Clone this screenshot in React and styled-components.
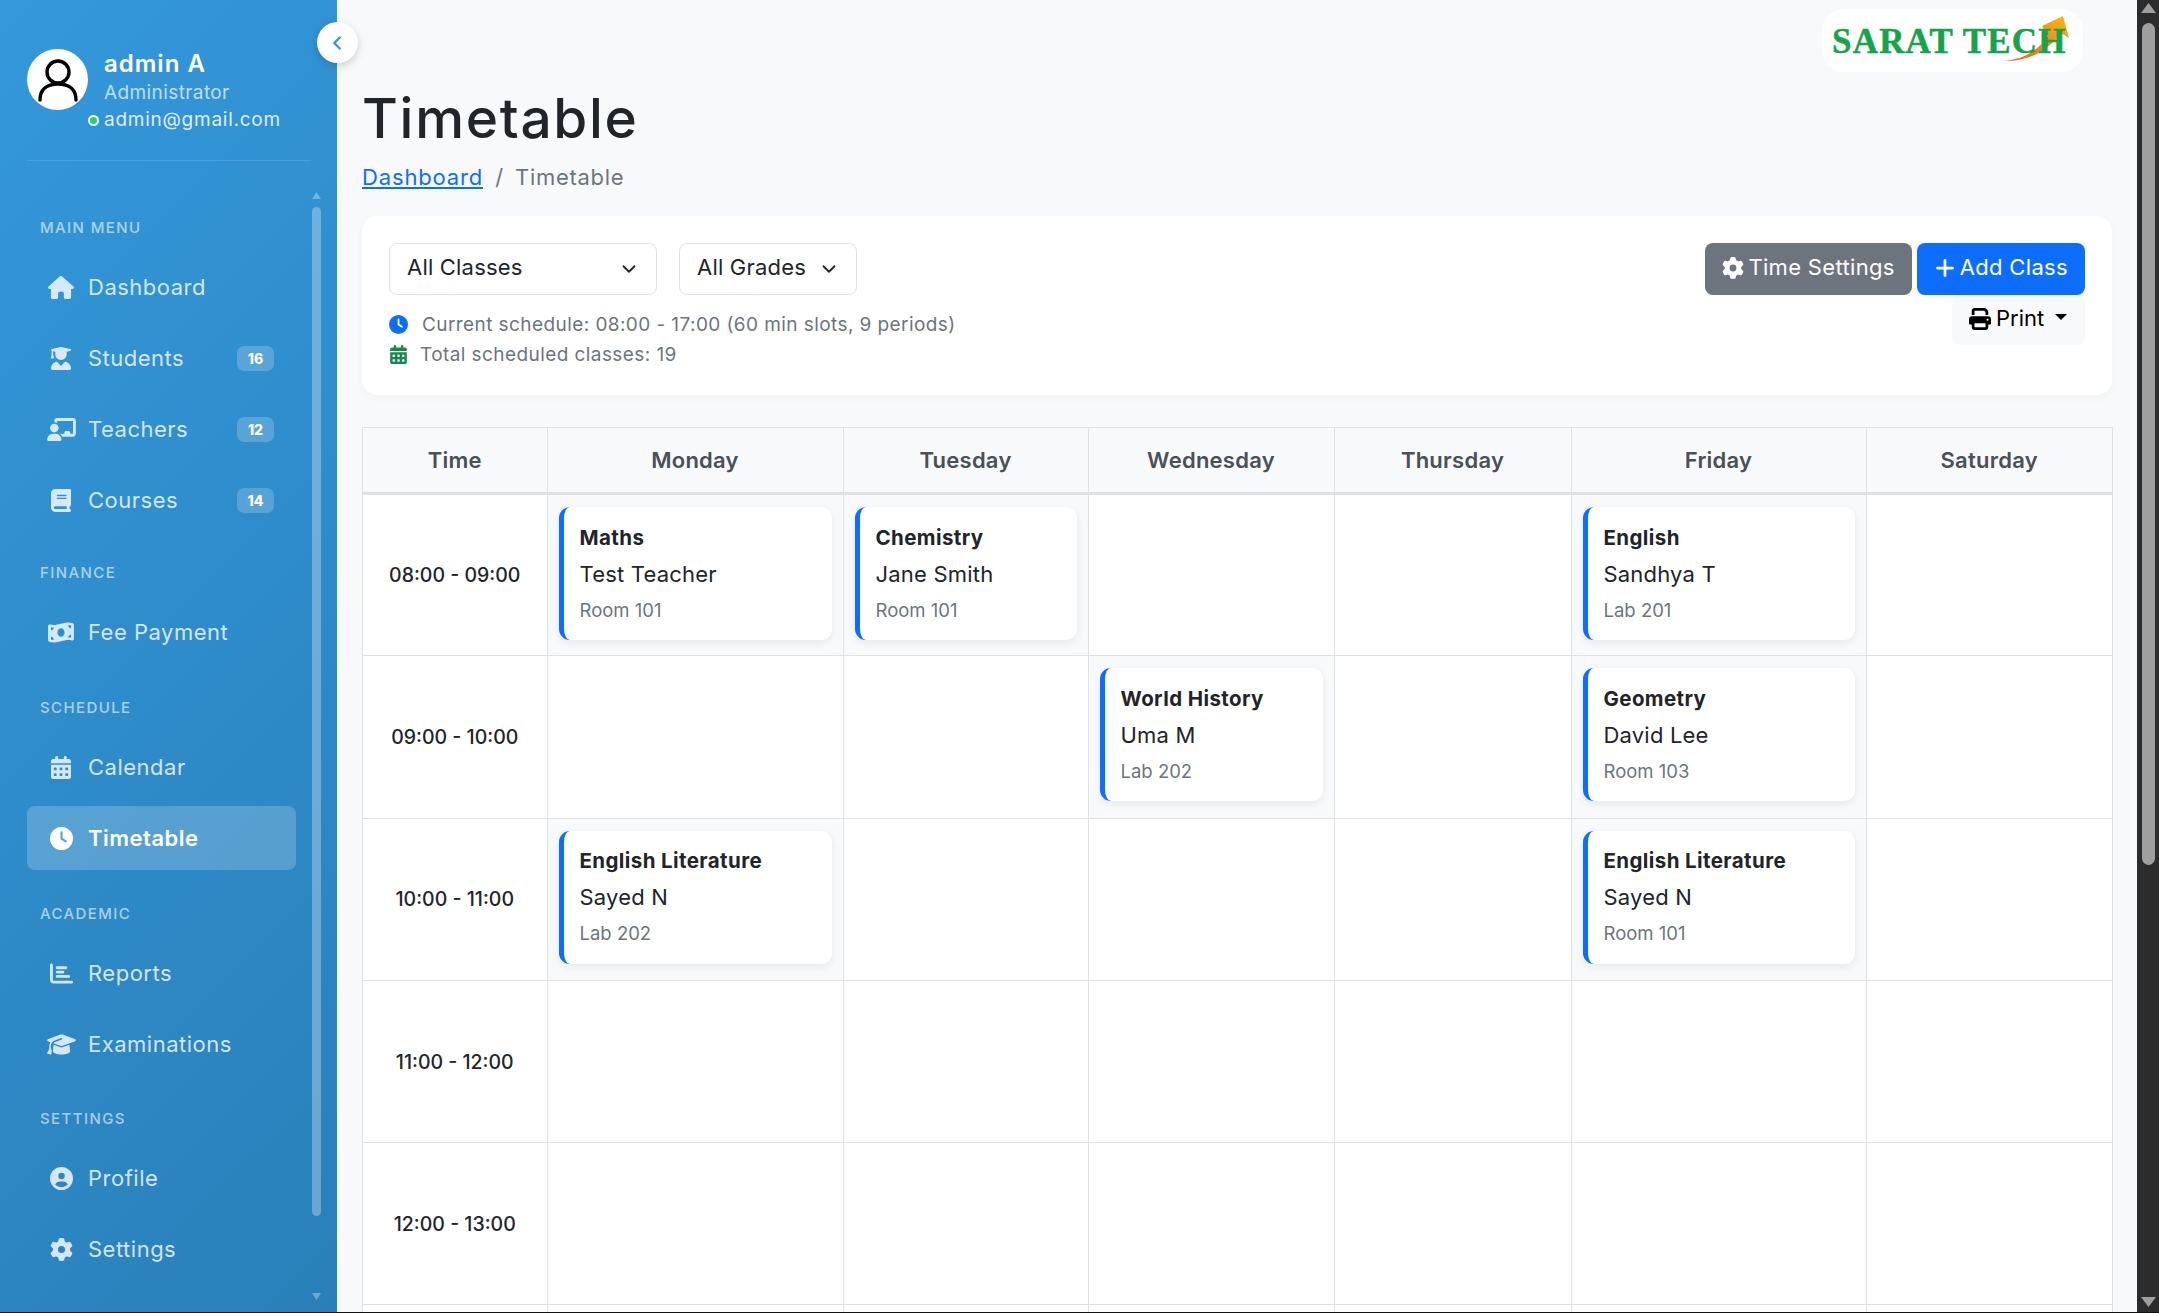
import React from 'react';
import styled, { createGlobalStyle, css } from 'styled-components';
import {
  FaHouse, FaUserGraduate, FaChalkboardUser, FaBook, FaMoneyBillWave, FaCalendarDays,
  FaClock, FaChartBar, FaGraduationCap, FaCircleUser, FaGear, FaPrint, FaPlus,
} from 'react-icons/fa6';
import { LuChevronDown, LuChevronLeft } from 'react-icons/lu';

const FONT = `"Inter", "Noto Sans", "Liberation Sans", sans-serif`;

const Global = createGlobalStyle`
  html, body { margin: 0; height: 100%; overflow: hidden; background: #111; }
  body { font-family: ${FONT}; color: #212529; }
  * { box-sizing: border-box; }
`;

const Shell = styled.div`
  display: flex;
  height: 1312px;
`;

const Sidebar = styled.aside`
  position: relative;
  flex: 0 0 337px;
  display: flex;
  flex-direction: column;
  background: linear-gradient(135deg, #3498db 0%, #2980b9 100%);
  z-index: 2;
`;

const Toggle = styled.button`
  position: absolute;
  top: 22px;
  right: -21px;
  width: 41px;
  height: 41px;
  border: 0;
  padding: 0;
  border-radius: 50%;
  background: #fff;
  color: #3498db;
  display: flex;
  align-items: center;
  justify-content: center;
  box-shadow: 0 3px 8px rgba(0, 0, 0, 0.18);
  font-size: 22px;
  svg { stroke-width: 2.6; margin-right: 2px; }
`;

const Profile = styled.div`
  margin: 0 26px 0 27px;
  height: 161px;
  padding-top: 49px;
  display: flex;
  gap: 16px;
  border-bottom: 1px solid rgba(255, 255, 255, 0.12);
  flex: none;
`;

const Avatar = styled.div`
  position: relative;
  flex: none;
  width: 61px;
  height: 61px;
  border-radius: 50%;
  background: #fff;
  display: flex;
  align-items: center;
  justify-content: center;
`;

const AvatarSvg = styled.svg`
  width: 48px;
  height: 48px;
`;

const OnlineDot = styled.span`
  position: absolute;
  left: 61px;
  top: 66px;
  width: 11px;
  height: 11px;
  border-radius: 50%;
  background: #2ecc71;
  border: 2px solid #fff;
`;

const ProfileText = styled.div`
  display: flex;
  flex-direction: column;
  color: #fff;
`;

const Name = styled.div`
  font-size: 24px;
  font-weight: 600;
  line-height: 30px;
  letter-spacing: 1px;
`;

const Role = styled.div`
  font-size: 19px;
  line-height: 27px;
  color: rgba(255, 255, 255, 0.7);
  letter-spacing: 0.4px;
`;

const Email = styled.div`
  font-size: 19px;
  line-height: 28px;
  color: rgba(255, 255, 255, 0.85);
  letter-spacing: 0.75px;
`;

const NavArea = styled.div`
  flex: 1;
  min-height: 0;
  display: flex;
`;

const Nav = styled.nav`
  flex: 1;
  min-width: 0;
  overflow: hidden;
  padding: 55px 16px 0 27px;
`;

const Rail = styled.div`
  flex: none;
  width: 9px;
  margin: 31px 16px 12px 0;
  display: flex;
  flex-direction: column;
`;

const RailArrow = styled.svg`
  display: block;
  flex: none;
  width: 9px;
  height: 7px;
  fill: rgba(255, 255, 255, 0.32);
`;

const RailThumb = styled.div`
  flex: none;
  height: 1009px;
  margin: 8px 0 auto;
  border-radius: 5px;
  background: rgba(255, 255, 255, 0.3);
`;

const SectionLabel = styled.div`
  padding: 0 13px;
  height: 22px;
  margin-top: ${(p) => p.$top}px;
  margin-bottom: 17px;
  display: flex;
  align-items: center;
  font-size: 15px;
  font-weight: 500;
  letter-spacing: 1.4px;
  text-transform: uppercase;
  color: rgba(255, 255, 255, 0.6);
`;

const NavItem = styled.a`
  display: flex;
  align-items: center;
  height: 64px;
  margin-top: 7px;
  padding: 0 22px 0 20px;
  border-radius: 8px;
  font-size: 22px;
  color: rgba(255, 255, 255, 0.8);
  ${(p) => p.$active && css`
    background: rgba(255, 255, 255, 0.2);
    color: #fff;
    font-weight: 600;
  `}
`;

const NavIcon = styled.span`
  flex: none;
  width: 28px;
  margin-right: 13px;
  display: flex;
  justify-content: center;
  svg { flex: none; width: ${(p) => p.$w}px; height: 23px; }
`;

const NavText = styled.span`
  flex: 1;
  letter-spacing: 0.5px;
`;

const Badge = styled.span`
  flex: none;
  width: 37px;
  height: 25px;
  border-radius: 7px;
  background: rgba(255, 255, 255, 0.2);
  color: #fff;
  display: flex;
  align-items: center;
  justify-content: center;
  font-size: 14px;
  font-weight: 800;
`;

const Main = styled.main`
  flex: 1;
  min-width: 0;
  background: #f8f9fa;
  overflow: hidden;
  padding: 9px 25px 0;
`;

const PageBar = styled.div`
  flex: 0 0 22px;
  background: #2c2c2c;
  display: flex;
  flex-direction: column;
  align-items: center;
  padding: 3px 0 5px;
`;

const BarArrow = styled.svg`
  display: block;
  flex: none;
  width: 15px;
  height: 10px;
  fill: #9f9f9f;
`;

const BarThumb = styled.div`
  flex: none;
  width: 13px;
  height: 842px;
  margin: 10px 0 auto;
  border-radius: 7px;
  background: #9f9f9f;
`;

const LogoRow = styled.div`
  display: flex;
  justify-content: flex-end;
  padding-right: 29px;
`;

const LogoBox = styled.div`
  position: relative;
  width: 261px;
  height: 63px;
  border-radius: 22px;
  background: #fff;
  display: flex;
  align-items: center;
  padding: 2px 0 0 10px;
`;

const LogoText = styled.span`
  position: relative;
  font-family: "Liberation Serif", "DejaVu Serif", serif;
  font-weight: 700;
  font-size: 35px;
  letter-spacing: 1.2px;
  white-space: nowrap;
  color: #16a34a;
  -webkit-text-stroke: 0.5px #16a34a;
`;

const LogoArrow = styled.svg`
  position: absolute;
  left: 178px;
  top: 0;
  width: 72px;
  height: 56px;
`;

const Title = styled.h1`
  margin: 13px 0 0;
  font-size: 55px;
  line-height: 66px;
  font-weight: 500;
  color: #212529;
  letter-spacing: 1.7px;
`;

const Crumbs = styled.div`
  margin: 9px 0 23px;
  display: flex;
  align-items: center;
  height: 33px;
  font-size: 22px;
  color: #6c757d;
`;

const CrumbLink = styled.a`
  color: #0d6efd;
  text-decoration: underline;
  letter-spacing: 0.85px;
`;

const CrumbSep = styled.span`
  margin: 0 12px;
`;

const CrumbNow = styled.span`
  letter-spacing: 0.7px;
`;

const FilterCard = styled.section`
  height: 179px;
  background: #fff;
  border-radius: 15px;
  padding: 27px;
  display: flex;
  justify-content: space-between;
  box-shadow: 0 3px 10px rgba(0, 0, 0, 0.03);
`;

const FilterLeft = styled.div`
  display: flex;
  flex-direction: column;
`;

const Selects = styled.div`
  display: flex;
  gap: 22px;
`;

const SelectBox = styled.div`
  width: ${(p) => p.$w}px;
  height: 52px;
  border: 1px solid #dee2e6;
  border-radius: 8px;
  padding: 0 17px 4px;
  display: flex;
  align-items: center;
  justify-content: space-between;
  font-size: 22px;
  color: #212529;
  letter-spacing: 0.2px;
  background: #fff;
  svg { font-size: 22px; margin-right: -1px; margin-top: 3px; }
`;

const InfoList = styled.div`
  margin-top: 14px;
`;

const InfoLine = styled.div`
  display: flex;
  align-items: center;
  height: 30px;
  font-size: 19px;
  color: #6c757d;
  letter-spacing: 0.42px;
`;

const InfoIcon = styled.span`
  flex: none;
  width: ${(p) => p.$w}px;
  display: flex;
  font-size: 19px;
  color: ${(p) => p.$color};
`;

const FilterRight = styled.div`
  width: 400px;
  display: flex;
  flex-wrap: wrap;
  justify-content: flex-end;
  align-content: flex-start;
  column-gap: 5px;
`;

const Btn = styled.button`
  height: 52px;
  border: 0;
  border-radius: 8px;
  padding: 0 17px 4px;
  display: inline-flex;
  align-items: center;
  gap: 4px;
  font-family: ${FONT};
  font-size: 22px;
  letter-spacing: 0.33px;
  color: #fff;
  background: ${(p) => (p.$variant === 'primary' ? '#0d6efd' : '#6c757d')};
  svg { font-size: 22px; margin-top: 1px; }
`;

const PrintBtn = styled.button`
  width: 133px;
  height: 50px;
  border: 0;
  border-radius: 8px;
  padding: 0 17px 4px;
  display: inline-flex;
  align-items: center;
  gap: 5px;
  font-family: ${FONT};
  font-size: 22px;
  color: #000;
  background: #f8f9fa;
  svg { font-size: 22px; flex: none; margin-top: 2px; }
`;

const Caret = styled.span`
  margin-left: 6px;
  width: 0;
  height: 0;
  border-left: 6px solid transparent;
  border-right: 6px solid transparent;
  border-top: 6px solid #000;
  transform: translateY(-1px);
`;

const Table = styled.table`
  width: 1750px;
  margin-top: 32px;
  table-layout: fixed;
  border-collapse: collapse;
  background: #fff;
`;

const Col = styled.col`
  width: ${(p) => p.$w}px;
`;

const HeadCell = styled.th`
  height: 66px;
  padding: 0;
  background: #f8f9fa;
  border: 1px solid #dee2e6;
  border-bottom: 3px solid #dee2e6;
  font-size: 22px;
  font-weight: 600;
  color: #495057;
  text-align: center;
  letter-spacing: 0.25px;
`;

const TimeCell = styled.td`
  height: 162.3px;
  padding: 0;
  border: 1px solid #dee2e6;
  background: #fff;
  text-align: center;
  font-size: 19.5px;
  font-weight: 500;
  color: #212529;
`;

const Slot = styled.td`
  padding: 12px 11px 11px;
  border: 1px solid #dee2e6;
  vertical-align: top;
  background: ${(p) => (p.$filled ? '#f8f9fa' : '#fff')};
`;

const ClassCard = styled.div`
  height: 133px;
  background: #fff;
  border-left: 5.5px solid #0d6efd;
  border-radius: 11px;
  padding: 0 15px 0 16px;
  display: flex;
  flex-direction: column;
  justify-content: center;
  box-shadow: 0 3px 8px rgba(0, 0, 0, 0.07);
`;

const Subject = styled.div`
  font-size: 20.5px;
  font-weight: 700;
  line-height: 36px;
  color: #212529;
  white-space: nowrap;
  letter-spacing: 0.4px;
`;

const Teacher = styled.div`
  font-size: 22px;
  line-height: 36px;
  color: #212529;
  letter-spacing: 0.2px;
`;

const Room = styled.div`
  font-size: 18.5px;
  line-height: 36px;
  color: #6c757d;
`;

const sections = [
  { label: 'Main Menu', top: 0, items: [
    { t: 'Dashboard', i: FaHouse, w: 26 },
    { t: 'Students', i: FaUserGraduate, w: 20, b: 16 },
    { t: 'Teachers', i: FaChalkboardUser, w: 29, b: 12 },
    { t: 'Courses', i: FaBook, w: 20, b: 14 },
  ] },
  { label: 'Finance', top: 29, items: [{ t: 'Fee Payment', i: FaMoneyBillWave, w: 26 }] },
  { label: 'Schedule', top: 32, items: [{ t: 'Calendar', i: FaCalendarDays, w: 20 }, { t: 'Timetable', i: FaClock, w: 23, active: true }] },
  { label: 'Academic', top: 32, items: [{ t: 'Reports', i: FaChartBar, w: 23 }, { t: 'Examinations', i: FaGraduationCap, w: 29 }] },
  { label: 'Settings', top: 31, items: [{ t: 'Profile', i: FaCircleUser, w: 23 }, { t: 'Settings', i: FaGear, w: 23 }] },
];

const cols = [
  { d: 'Time', w: 184.5 }, { d: 'Monday', w: 296 }, { d: 'Tuesday', w: 245 }, { d: 'Wednesday', w: 246 },
  { d: 'Thursday', w: 237 }, { d: 'Friday', w: 295 }, { d: 'Saturday', w: 246.5 },
];

const rows = [
  { time: '08:00 - 09:00', cells: { Monday: ['Maths', 'Test Teacher', 'Room 101'], Tuesday: ['Chemistry', 'Jane Smith', 'Room 101'], Friday: ['English', 'Sandhya T', 'Lab 201'] } },
  { time: '09:00 - 10:00', cells: { Wednesday: ['World History', 'Uma M', 'Lab 202'], Friday: ['Geometry', 'David Lee', 'Room 103'] } },
  { time: '10:00 - 11:00', cells: { Monday: ['English Literature', 'Sayed N', 'Lab 202'], Friday: ['English Literature', 'Sayed N', 'Room 101'] } },
  { time: '11:00 - 12:00', cells: {} },
  { time: '12:00 - 13:00', cells: {} },
  { time: '', cells: {} },
];

export default function App() {
  return (
    <>
      <Global />
      <Shell>
        <Sidebar>
          <Toggle aria-label="Collapse"><LuChevronLeft /></Toggle>
          <Profile>
            <Avatar>
              <AvatarSvg viewBox="0 0 48 48" fill="none" stroke="#000" strokeWidth="3.4">
                <circle cx="24" cy="16" r="11" />
                <path d="M6 44c0-10 6-16 18-16s18 6 18 16" strokeLinecap="round" />
              </AvatarSvg>
              <OnlineDot />
            </Avatar>
            <ProfileText>
              <Name>admin A</Name>
              <Role>Administrator</Role>
              <Email>admin@gmail.com</Email>
            </ProfileText>
          </Profile>
          <NavArea>
            <Nav>
              {sections.map((s) => (
                <div key={s.label}>
                  <SectionLabel $top={s.top}>{s.label}</SectionLabel>
                  {s.items.map((it) => (
                    <NavItem key={it.t} $active={it.active}>
                      <NavIcon $w={it.w}><it.i /></NavIcon>
                      <NavText>{it.t}</NavText>
                      {it.b ? <Badge>{it.b}</Badge> : null}
                    </NavItem>
                  ))}
                </div>
              ))}
            </Nav>
            <Rail>
              <RailArrow viewBox="0 0 9 7"><path d="M4.5 0L9 7H0z" /></RailArrow>
              <RailThumb />
              <RailArrow viewBox="0 0 9 7"><path d="M0 0h9L4.5 7z" /></RailArrow>
            </Rail>
          </NavArea>
        </Sidebar>
        <Main>
          <LogoRow>
            <LogoBox>
              <LogoArrow viewBox="0 0 72 56">
                <defs>
                  <linearGradient id="logoArrowFill" x1="0" y1="1" x2="1" y2="0">
                    <stop offset="0" stopColor="#e8662a" />
                    <stop offset="0.55" stopColor="#f08a1d" />
                    <stop offset="1" stopColor="#fdb913" />
                  </linearGradient>
                </defs>
                <path d="M2 52C22 51 38 42 48 27L42 17L63 7L69 29L61 24C48 42 28 53 2 52z" fill="url(#logoArrowFill)" />
              </LogoArrow>
              <LogoText>SARAT TECH</LogoText>
            </LogoBox>
          </LogoRow>
          <Title>Timetable</Title>
          <Crumbs>
            <CrumbLink>Dashboard</CrumbLink>
            <CrumbSep>/</CrumbSep>
            <CrumbNow>Timetable</CrumbNow>
          </Crumbs>
          <FilterCard>
            <FilterLeft>
              <Selects>
                <SelectBox $w={268}>All Classes <LuChevronDown /></SelectBox>
                <SelectBox $w={178}>All Grades <LuChevronDown /></SelectBox>
              </Selects>
              <InfoList>
                <InfoLine><InfoIcon $w={33} $color="#0d6efd"><FaClock /></InfoIcon>Current schedule: 08:00 - 17:00 (60 min slots, 9 periods)</InfoLine>
                <InfoLine><InfoIcon $w={31} $color="#198754"><FaCalendarDays /></InfoIcon>Total scheduled classes: 19</InfoLine>
              </InfoList>
            </FilterLeft>
            <FilterRight>
              <Btn><FaGear /> Time Settings</Btn>
              <Btn $variant="primary"><FaPlus /> Add Class</Btn>
              <PrintBtn><FaPrint /> Print <Caret /></PrintBtn>
            </FilterRight>
          </FilterCard>
          <Table>
            <colgroup>{cols.map((c) => <Col key={c.d} $w={c.w} />)}</colgroup>
            <thead>
              <tr>{cols.map((c) => <HeadCell key={c.d}>{c.d}</HeadCell>)}</tr>
            </thead>
            <tbody>
              {rows.map((r, idx) => (
                <tr key={idx}>
                  <TimeCell>{r.time}</TimeCell>
                  {cols.slice(1).map((c) => {
                    const k = r.cells[c.d];
                    return (
                      <Slot key={c.d} $filled={!!k}>
                        {k && (
                          <ClassCard>
                            <Subject>{k[0]}</Subject>
                            <Teacher>{k[1]}</Teacher>
                            <Room>{k[2]}</Room>
                          </ClassCard>
                        )}
                      </Slot>
                    );
                  })}
                </tr>
              ))}
            </tbody>
          </Table>
        </Main>
        <PageBar>
          <BarArrow viewBox="0 0 15 10"><path d="M7.5 0L15 10H0z" /></BarArrow>
          <BarThumb />
          <BarArrow viewBox="0 0 15 10"><path d="M0 0h15L7.5 10z" /></BarArrow>
        </PageBar>
      </Shell>
    </>
  );
}
